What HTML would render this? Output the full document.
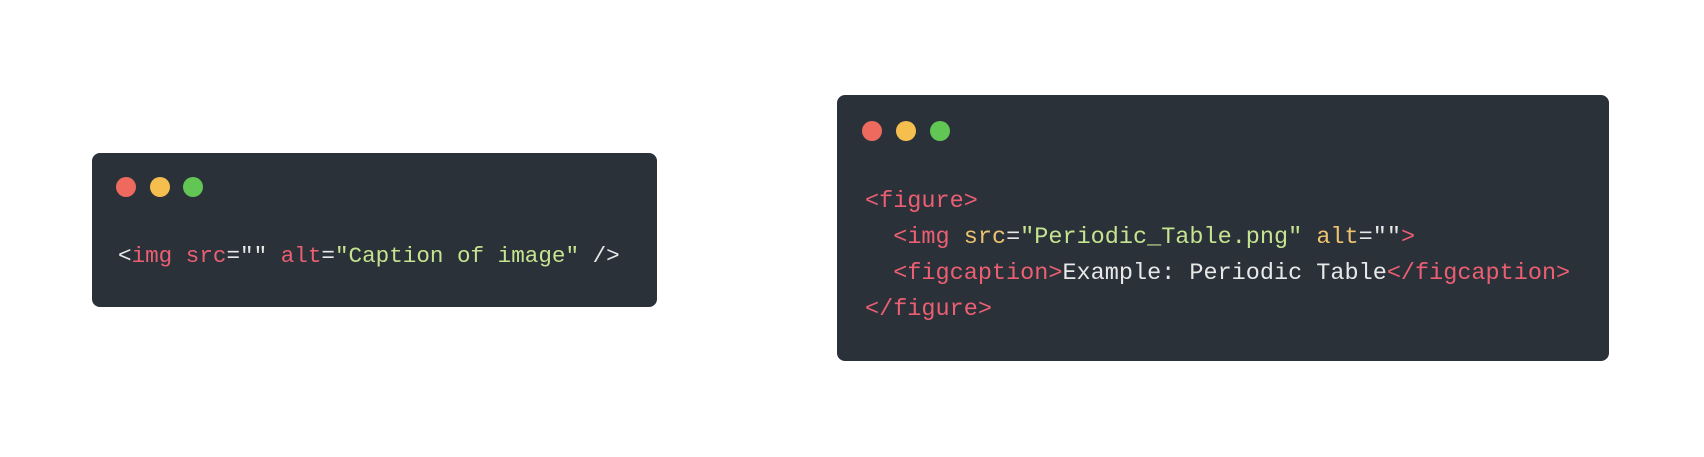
<!DOCTYPE html>
<html><head><style>
html,body{margin:0;padding:0;background:#fff;width:1704px;height:457px;overflow:hidden;position:relative}
.box{position:absolute;background:#2a3138;border-radius:8px}
.dot{position:absolute;width:20px;height:20px;border-radius:50%}
.r{background:#ee6a5f}.y{background:#f5be4f}.g{background:#62c655}
pre{position:absolute;margin:0;font-family:"Liberation Mono",monospace;font-size:23.5px;color:#e8e8e8;line-height:36px;white-space:pre}
.t{color:#ec5f73}.a{color:#eec36f}.s{color:#c5e48f}
</style></head><body>
<div class="box" style="left:92px;top:153px;width:565px;height:154px">
<div class="dot r" style="left:24px;top:24px"></div>
<div class="dot y" style="left:58px;top:24px"></div>
<div class="dot g" style="left:91px;top:24px"></div>
<pre style="left:26px;top:85px;font-size:22.6px">&lt;<span class="t">img src</span>="" <span class="t">alt</span>=<span class="s">"Caption of image"</span> /&gt;</pre>
</div>
<div class="box" style="left:837px;top:95px;width:772px;height:266px">
<div class="dot r" style="left:25px;top:26px"></div>
<div class="dot y" style="left:59px;top:26px"></div>
<div class="dot g" style="left:93px;top:26px"></div>
<pre style="left:28px;top:89px"><span class="t">&lt;figure&gt;</span>
  <span class="t">&lt;img</span> <span class="a">src</span>=<span class="s">"Periodic_Table.png"</span> <span class="a">alt</span>=""<span class="t">&gt;</span>
  <span class="t">&lt;figcaption&gt;</span>Example: Periodic Table<span class="t">&lt;/figcaption&gt;</span>
<span class="t">&lt;/figure&gt;</span></pre>
</div>
</body></html>
